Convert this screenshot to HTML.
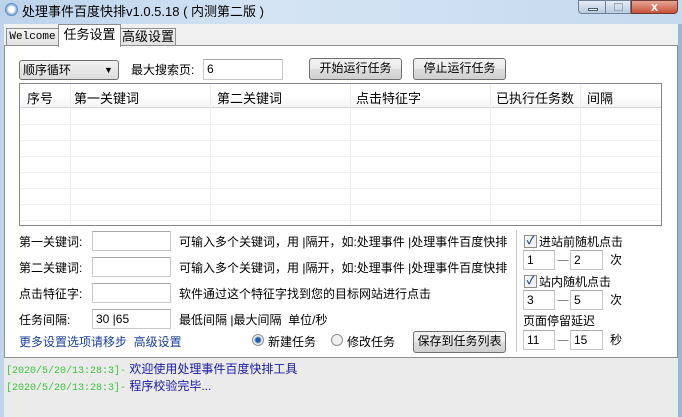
<!DOCTYPE html>
<html><head><meta charset="utf-8"><style>
*{margin:0;padding:0;box-sizing:border-box}
body{width:682px;height:417px;overflow:hidden;position:relative;background:#c9dcef;font:12px "Liberation Sans","Noto Sans CJK SC",sans-serif;color:#000}
.a{position:absolute;white-space:nowrap}
.in{position:absolute;background:#fff;border:1px solid #c8c8c8;border-top-color:#a9a9a9;font-size:12px;line-height:18px;padding-left:3px}
.btn{position:absolute;border:1px solid #707070;border-radius:3px;background:linear-gradient(#f2f2f2,#ebebeb 50%,#dddddd 51%,#cfcfcf);text-align:center;line-height:19px}
.cb{position:absolute;width:13px;height:13px;border:1px solid #8e8f8f;background:#f4f4f4;color:#2a4da0;font-size:11px;line-height:11px;text-align:center;font-weight:bold}
</style></head><body>
<div class="a" style="left:0;top:0;width:682px;height:24px;background:linear-gradient(90deg,#bcd3ec,#d4e4f4 40%,#c5d9ee)"></div>
<div class="a" style="left:5px;top:3px;width:13px;height:13px;border-radius:50%;background:radial-gradient(#fff 30%,#4a7fc0 70%)"></div>
<div class="a" style="left:22px;top:1px;font-size:13px">处理事件百度快排v1.0.5.18 ( 内测第二版 )</div>
<div class="a" style="left:578px;top:0;width:28px;height:14px;border:1px solid #6d7f98;border-radius:0 0 0 4px;background:linear-gradient(#e4ecf6,#b9cbe0)"><div class="a" style="left:9px;top:7px;width:10px;height:3px;background:#fff;border:1px solid #465a78"></div></div>
<div class="a" style="left:605px;top:0;width:26px;height:14px;border:1px solid #6d7f98;background:linear-gradient(#e4ecf6,#b9cbe0)"><div class="a" style="left:8px;top:2px;width:9px;height:8px;border:1px solid #9aa8ba"></div></div>
<div class="a" style="left:631px;top:0;width:47px;height:14px;border:1px solid #6d3b33;border-radius:0 0 4px 0;background:linear-gradient(#e7a595,#c9503a);color:#fff;font-weight:bold;text-align:center;line-height:12px;font-size:13px">x</div>
<div class="a" style="left:0;top:24px;width:4px;height:393px;background:#c0d5ec"></div>
<div class="a" style="left:678px;top:24px;width:4px;height:393px;background:#9ab6d6"></div>
<div class="a" style="left:4px;top:24px;width:674px;height:393px;background:#f0f0f0"></div>
<div class="a" style="left:6px;top:28px;width:53px;height:18px;border:1px solid #8e8f8f;background:linear-gradient(#f3f3f3,#e3e3e3);font:11px 'Liberation Mono',monospace;line-height:16px;text-align:center">Welcome</div>
<div class="a" style="left:120px;top:28px;width:56px;height:18px;border:1px solid #8e8f8f;background:linear-gradient(#f3f3f3,#e3e3e3);line-height:16px;text-align:center;font-size:13px">高级设置</div>
<div class="a" style="left:4px;top:45px;width:674px;height:313px;background:#fff;border:1px solid #8e8f8f"></div>
<div class="a" style="left:58px;top:24px;width:63px;height:23px;border:1px solid #8e8f8f;border-bottom:none;background:#fff;line-height:20px;text-align:center;font-size:13px">任务设置</div>
<div class="a" style="left:19px;top:60px;width:100px;height:20px;border:1px solid #707070;border-radius:3px;background:linear-gradient(#f2f2f2,#dcdcdc);padding-left:3px;line-height:18px">顺序循环<span class="a" style="left:84px;top:0;font-size:9px">▼</span></div>
<div class="a" style="left:131px;top:61px">最大搜索页:</div>
<div class="in" style="left:203px;top:59px;width:80px;height:21px">6</div>
<div class="btn" style="left:309px;top:58px;width:93px;height:22px">开始运行任务</div>
<div class="btn" style="left:413px;top:58px;width:93px;height:22px">停止运行任务</div>
<div class="a" style="left:19px;top:83px;width:643px;height:143px;border:1px solid #828790;background:#fff;overflow:hidden">
<div class="a" style="left:0;top:0;width:643px;height:24px;background:linear-gradient(#fff,#fff 50%,#f4f5f7);border-bottom:1px solid #d5d5d5"></div>
<div class="a" style="left:7px;top:4px;font-size:13px">序号</div>
<div class="a" style="left:54px;top:4px;font-size:13px">第一关键词</div>
<div class="a" style="left:197px;top:4px;font-size:13px">第二关键词</div>
<div class="a" style="left:336px;top:4px;font-size:13px">点击特征字</div>
<div class="a" style="left:476px;top:4px;font-size:13px">已执行任务数</div>
<div class="a" style="left:567px;top:4px;font-size:13px">间隔</div>
<div class="a" style="left:50px;top:0;width:1px;height:143px;background:#ececec"></div>
<div class="a" style="left:190px;top:0;width:1px;height:143px;background:#ececec"></div>
<div class="a" style="left:330px;top:0;width:1px;height:143px;background:#ececec"></div>
<div class="a" style="left:470px;top:0;width:1px;height:143px;background:#ececec"></div>
<div class="a" style="left:560px;top:0;width:1px;height:143px;background:#ececec"></div>
<div class="a" style="left:0;top:40px;width:643px;height:1px;background:#f0f0f0"></div>
<div class="a" style="left:0;top:56px;width:643px;height:1px;background:#f0f0f0"></div>
<div class="a" style="left:0;top:72px;width:643px;height:1px;background:#f0f0f0"></div>
<div class="a" style="left:0;top:88px;width:643px;height:1px;background:#f0f0f0"></div>
<div class="a" style="left:0;top:104px;width:643px;height:1px;background:#f0f0f0"></div>
<div class="a" style="left:0;top:120px;width:643px;height:1px;background:#f0f0f0"></div>
<div class="a" style="left:0;top:136px;width:643px;height:1px;background:#f0f0f0"></div>
</div>
<div class="a" style="left:19px;top:233px">第一关键词:</div><div class="in" style="left:92px;top:231px;width:79px;height:20px"></div><div class="a" style="left:179px;top:233px">可输入多个关键词，用 |隔开，如:处理事件 |处理事件百度快排</div>
<div class="a" style="left:19px;top:259px">第二关键词:</div><div class="in" style="left:92px;top:257px;width:79px;height:20px"></div><div class="a" style="left:179px;top:259px">可输入多个关键词，用 |隔开，如:处理事件 |处理事件百度快排</div>
<div class="a" style="left:19px;top:285px">点击特征字:</div><div class="in" style="left:92px;top:283px;width:79px;height:20px"></div><div class="a" style="left:179px;top:285px">软件通过这个特征字找到您的目标网站进行点击</div>
<div class="a" style="left:19px;top:311px">任务间隔:</div><div class="in" style="left:92px;top:309px;width:79px;height:20px">30 |65</div><div class="a" style="left:179px;top:311px">最低间隔 |最大间隔&nbsp; 单位/秒</div>
<div class="a" style="left:19px;top:333px;color:#1a3fa0">更多设置选项请移步&nbsp; 高级设置</div>
<div class="a" style="left:252px;top:334px;width:12px;height:12px;border-radius:50%;border:1px solid #8e8f8f;background:radial-gradient(#1d5fa8 30%,#8ab4de 45%,#f0f0f0 55%)"></div>
<div class="a" style="left:268px;top:333px">新建任务</div>
<div class="a" style="left:331px;top:334px;width:12px;height:12px;border-radius:50%;border:1px solid #8e8f8f;background:#f0f0f0"></div>
<div class="a" style="left:347px;top:333px">修改任务</div>
<div class="btn" style="left:413px;top:331px;width:93px;height:22px">保存到任务列表</div>
<div class="a" style="left:516px;top:230px;width:1px;height:122px;background:#c8c8c8"></div>
<div class="cb" style="left:524px;top:235px">✓</div><div class="a" style="left:539px;top:233px">进站前随机点击</div>
<div class="in" style="left:523px;top:250px;width:32px;height:20px">1</div><div class="a" style="left:557px;top:252px;color:#888">一</div><div class="in" style="left:570px;top:250px;width:33px;height:20px">2</div><div class="a" style="left:610px;top:251px">次</div>
<div class="cb" style="left:524px;top:275px">✓</div><div class="a" style="left:539px;top:273px">站内随机点击</div>
<div class="in" style="left:523px;top:290px;width:32px;height:20px">3</div><div class="a" style="left:557px;top:292px;color:#888">一</div><div class="in" style="left:570px;top:290px;width:33px;height:20px">5</div><div class="a" style="left:610px;top:291px">次</div>
<div class="a" style="left:523px;top:312px">页面停留延迟</div>
<div class="in" style="left:523px;top:330px;width:32px;height:20px">11</div><div class="a" style="left:557px;top:332px;color:#888">一</div><div class="in" style="left:570px;top:330px;width:33px;height:20px">15</div><div class="a" style="left:610px;top:331px">秒</div>
<div class="a" style="left:4px;top:358px;width:674px;height:59px;background:#ebebeb"></div>
<div class="a" style="left:6px;top:360px;font-size:12px"><span style="color:#3ec43e;font-family:'Liberation Mono',monospace;font-size:10px">[2020/5/20/13:28:3]-</span> <span style="color:#1a1aa8">欢迎使用处理事件百度快排工具</span></div>
<div class="a" style="left:6px;top:377px;font-size:12px"><span style="color:#3ec43e;font-family:'Liberation Mono',monospace;font-size:10px">[2020/5/20/13:28:3]-</span> <span style="color:#1a1aa8">程序校验完毕...</span></div>
</body></html>
